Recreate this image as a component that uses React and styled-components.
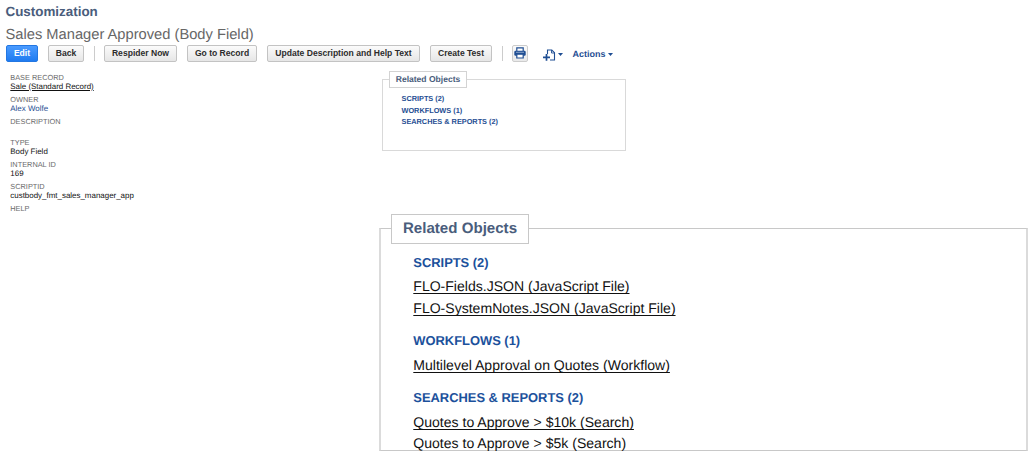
import React from "react";
import styled, { createGlobalStyle } from "styled-components";

const GlobalStyle = createGlobalStyle`
  * { box-sizing: border-box; }
  body {
    margin: 0;
    background: #fff;
    font-family: "Liberation Sans", Arial, Helvetica, sans-serif;
    text-rendering: geometricPrecision;
    overflow: hidden;
  }
`;

const Page = styled.main`
  width: 1034px;
  height: 456px;
  overflow: hidden;
`;

const Header = styled.header`
  padding: 4px 0 0 5.5px;
  height: 45px;
`;

const Section = styled.div`
  font-size: 13.4px;
  font-weight: 700;
  line-height: 16px;
  color: #4a5d7c;
  white-space: nowrap;
`;

const Title = styled.h1`
  margin: 6px 0 0;
  font-size: 14.7px;
  font-weight: 400;
  line-height: 18px;
  color: #666;
  white-space: nowrap;
`;

const Toolbar = styled.div`
  display: flex;
  align-items: center;
  height: 17px;
  padding-left: 6px;
`;

const Button = styled.button`
  flex: none;
  width: ${(p) => p.$width}px;
  height: 17px;
  margin-right: 10px;
  padding: 0 0 1px;
  border: 1px solid ${(p) => (p.$primary ? "#2377e2" : "#c3c3c3")};
  border-radius: 2px;
  background: ${(p) =>
    p.$primary
      ? "linear-gradient(#4a9bff, #1f7bf0)"
      : "linear-gradient(#fbfbfb, #e6e6e6)"};
  color: ${(p) => (p.$primary ? "#fff" : "#2c2c2c")};
  font: 700 8.57px/14px "Liberation Sans", Arial, sans-serif;
  text-align: center;
  white-space: nowrap;
`;

const Divider = styled.span`
  flex: none;
  width: 1px;
  height: 15px;
  margin-right: ${(p) => p.$after}px;
  background: #ccc;
`;

const IconButton = styled.button`
  display: flex;
  align-items: flex-start;
  justify-content: center;
  width: 16px;
  height: 17px;
  padding: 1px 0 0;
  border: 1px solid #ccc;
  border-radius: 2px;
  background: linear-gradient(#fafafa, #e9e9e9);
`;

const Menu = styled.a`
  display: flex;
  align-items: center;
  height: 17px;
  margin-left: ${(p) => p.$before}px;
  padding-top: ${(p) => p.$drop}px;
  gap: 2px;
  color: #1f4e93;
  font-size: 9px;
  font-weight: 700;
  line-height: 16px;
`;

const Columns = styled.div`
  display: flex;
  align-items: flex-start;
`;

const Fields = styled.dl`
  width: 379px;
  margin: 0;
  padding: 11px 0 0 10.3px;
`;

const Field = styled.div`
  height: 21.8px;
  white-space: nowrap;
`;

const Label = styled.dt`
  font-size: 7.36px;
  line-height: 10px;
  color: #6b6b6b;
`;

const Value = styled.dd`
  margin: -1px 0 0;
  font-size: 7.94px;
  line-height: 10px;
  color: ${(p) => (p.$link ? "#1f4e93" : "#111")};
  text-decoration: ${(p) => (p.$underline ? "underline" : "none")};
  text-underline-offset: 1px;
  text-decoration-thickness: 1px;
`;

const Panels = styled.div`
  padding-top: 17px;
`;

const SmallPanel = styled.section`
  width: 244px;
  height: 72px;
  margin-left: 3px;
  border: 1px solid #d9d9d9;
`;

const SmallLegend = styled.h2`
  width: 78px;
  height: 17px;
  margin: -9px 0 0 6px;
  border: 1px solid #d3d3d3;
  background: #fff;
  color: #4a5d7c;
  font-size: 8.54px;
  line-height: 15px;
  text-align: center;
  white-space: nowrap;
`;

const SmallList = styled.div`
  padding: 5.4px 0 0 18.5px;
  color: #1f4e93;
  font-size: 7.33px;
  font-weight: 700;
  line-height: 11.2px;
`;

const LargePanel = styled.section`
  width: 649px;
  height: 223px;
  margin-top: 77px;
  border: solid;
  border-width: 1px 2px;
  border-color: #c8c8c8 #dbdbdb;
`;

const LargeLegend = styled.h2`
  width: 138px;
  height: 30px;
  margin: -15px 0 0 10px;
  border: 1px solid #c8c8c8;
  background: #fff;
  color: #4a5d7c;
  font-size: 15.1px;
  line-height: 27px;
  text-align: center;
  white-space: nowrap;
`;

const LargeList = styled.div`
  padding: 9px 0 0 32.3px;
`;

const Group = styled.div`
  margin-bottom: 12.1px;

  &:last-child {
    margin-bottom: 0;
  }
`;

const GroupTitle = styled.h3`
  margin: 0;
  color: #1c519c;
  font-size: 12.92px;
  line-height: 20px;
  padding-bottom: 3.4px;
`;

const ObjectLink = styled.a`
  display: block;
  height: 21.4px;
  color: #111;
  font-size: 14.06px;
  line-height: 21px;
  white-space: nowrap;
  text-decoration: ${(p) => (p.$plain ? "none" : "underline")};
  text-decoration-thickness: 1px;
  text-underline-offset: 2px;
  text-decoration-skip-ink: none;
`;

const Caret = () => (
  <svg width="5" height="3" viewBox="0 0 5 3">
    <path d="M0 0h5L2.5 3z" fill="#1f4e93" />
  </svg>
);

const PrinterIcon = () => (
  <svg width="12" height="12" viewBox="0 0 12 12">
    <path d="M2.8 4.2V.9h6.4v3.3" fill="#fff" stroke="#1f4e93" strokeWidth="1.2" />
    <rect x=".3" y="3.8" width="11.4" height="5" rx="1.2" fill="#1f4e93" />
    <path d="M2 5.3h8" stroke="#b9cae3" strokeWidth=".7" />
    <path d="M2.8 7.1h6.4v3.9H2.8z" fill="#fff" stroke="#1f4e93" strokeWidth="1.2" />
  </svg>
);

const AddPageIcon = () => (
  <svg width="13" height="12" viewBox="0 0 13 12" fill="none" stroke="#1f4e93">
    <path d="M4.5 5V1h4.3l2.7 2.7V11H7" strokeWidth="1.1" />
    <path d="M8.5 1v3h3" strokeWidth=".9" />
    <path d="M0 8.3h7M3.5 4.9v6.9" strokeWidth="1.7" />
  </svg>
);

const fields = [
  { label: "BASE RECORD", value: "Sale (Standard Record)", underline: true },
  { label: "OWNER", value: "Alex Wolfe", link: true },
  { label: "DESCRIPTION" },
  { label: "TYPE", value: "Body Field" },
  { label: "INTERNAL ID", value: "169" },
  { label: "SCRIPTID", value: "custbody_fmt_sales_manager_app" },
  { label: "HELP" },
];

const groups = [
  {
    title: "SCRIPTS (2)",
    items: ["FLO-Fields.JSON (JavaScript File)", "FLO-SystemNotes.JSON (JavaScript File)"],
  },
  { title: "WORKFLOWS (1)", items: ["Multilevel Approval on Quotes (Workflow)"] },
  {
    title: "SEARCHES & REPORTS (2)",
    items: ["Quotes to Approve > $10k (Search)", "Quotes to Approve > $5k (Search)"],
  },
];

export default function App() {
  return (
    <Page>
      <GlobalStyle />
      <Header>
        <Section>Customization</Section>
        <Title>Sales Manager Approved (Body Field)</Title>
      </Header>
      <Toolbar>
        <Button $primary $width={32}>Edit</Button>
        <Button $width={36}>Back</Button>
        <Divider $after={9} />
        <Button $width={73}>Respider Now</Button>
        <Button $width={70}>Go to Record</Button>
        <Button $width={153}>Update Description and Help Text</Button>
        <Button $width={62}>Create Test</Button>
        <Divider $after={9} />
        <IconButton aria-label="Print"><PrinterIcon /></IconButton>
        <Menu $before={15} $drop={2}><AddPageIcon /><Caret /></Menu>
        <Menu $before={9.5} $drop={1}>Actions<Caret /></Menu>
      </Toolbar>
      <Columns>
        <Fields>
          {fields.map((f) => (
            <Field key={f.label}>
              <Label>{f.label}</Label>
              {f.value && (
                <Value $link={f.link} $underline={f.underline}>{f.value}</Value>
              )}
            </Field>
          ))}
        </Fields>
        <Panels>
          <SmallPanel>
            <SmallLegend>Related Objects</SmallLegend>
            <SmallList>
              {groups.map((g) => <div key={g.title}>{g.title}</div>)}
            </SmallList>
          </SmallPanel>
          <LargePanel>
            <LargeLegend>Related Objects</LargeLegend>
            <LargeList>
              {groups.map((g, gi) => (
                <Group key={g.title}>
                  <GroupTitle>{g.title}</GroupTitle>
                  {g.items.map((item, i) => (
                    <ObjectLink key={item} $plain={gi === 2 && i === 1}>{item}</ObjectLink>
                  ))}
                </Group>
              ))}
            </LargeList>
          </LargePanel>
        </Panels>
      </Columns>
    </Page>
  );
}
